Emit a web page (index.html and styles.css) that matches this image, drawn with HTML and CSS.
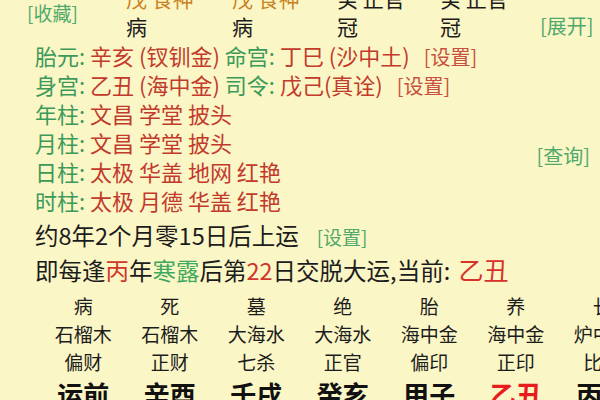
FILE: index.html
```html
<!DOCTYPE html>
<html lang="zh">
<head>
<meta charset="utf-8">
<link rel="stylesheet" href="styles.css">
</head>
<body>
<div class="page">
  <div class="top">
    <div class="fav link-green">[收藏]</div>
    <div class="cell r1 gan">戊 食神</div>
    <div class="cell r1 gan">戊 食神</div>
    <div class="cell r1">癸 正官</div>
    <div class="cell r1">癸 正官</div>
    <div class="cell r2">病</div>
    <div class="cell r2">病</div>
    <div class="cell r2">冠</div>
    <div class="cell r2">冠</div>
    <div class="expand link-green">[展开]</div>
  </div>

  <div class="info">
    <div class="line"><span class="lbl">胎元:</span> <span class="val">辛亥 (钗钏金)</span> <span class="lbl">命宫:</span> <span class="val">丁巳 (沙中土)</span><span class="set">[设置]</span></div>
    <div class="line"><span class="lbl">身宫:</span> <span class="val">乙丑 (海中金)</span> <span class="lbl">司令:</span> <span class="val">戊己(真诠)</span><span class="set">[设置]</span></div>
    <div class="shensha">
      <div class="ss-lines">
        <div class="line"><span class="lbl">年柱:</span> <span class="val">文昌 学堂 披头</span></div>
        <div class="line"><span class="lbl">月柱:</span> <span class="val">文昌 学堂 披头</span></div>
        <div class="line"><span class="lbl">日柱:</span> <span class="val">太极 华盖 地网 红艳</span></div>
        <div class="line"><span class="lbl">时柱:</span> <span class="val">太极 月德 华盖 红艳</span></div>
      </div>
      <div class="query link-green">[查询]</div>
    </div>
  </div>

  <div class="yun">
    <div class="yline">约8年2个月零15日后上运<span class="yset link-green">[设置]</span></div>
    <div class="yline">即每逢<span class="red">丙</span>年<span class="green">寒露</span>后第<span class="red">22</span>日交脱大运,当前: <span class="cur">乙丑</span></div>
  </div>

  <div class="dayun">
    <div>病</div><div>死</div><div>墓</div><div>绝</div><div>胎</div><div>养</div><div>长</div>
    <div>石榴木</div><div>石榴木</div><div>大海水</div><div>大海水</div><div>海中金</div><div>海中金</div><div>炉中火</div>
    <div>偏财</div><div>正财</div><div>七杀</div><div>正官</div><div>偏印</div><div>正印</div><div>比肩</div>
    <div class="big">运前</div><div class="big">辛酉</div><div class="big">壬戌</div><div class="big">癸亥</div><div class="big">甲子</div><div class="big now">乙丑</div><div class="big">丙寅</div>
  </div>
</div>
</body>
</html>
```

FILE: styles.css
```css
html, body {
  margin: 0;
  padding: 0;
}
body {
  background: #fbf6c6;
  font-family: "Noto Sans CJK SC", "Noto Sans", sans-serif;
  color: #1c1c1c;
  width: 600px;
  height: 400px;
  overflow: hidden;
}
.page {
  width: 600px;
  height: 400px;
  overflow: hidden;
}
.link-green {
  color: #4fa96c;
  font-size: 19px;
  line-height: 1;
  white-space: nowrap;
}
.top {
  display: grid;
  grid-template-columns: 126px 106px 105px 103px 100px 1fr;
  grid-template-rows: 28px 28px;
  margin-top: -16px;
  font-size: 21px;
  line-height: 28px;
}
.fav {
  grid-column: 1;
  grid-row: 1 / span 2;
  align-self: center;
  padding-left: 27px;
}
.cell {
  white-space: nowrap;
}
.r1 {
  grid-row: 1;
}
.r2 {
  grid-row: 2;
}
.gan {
  color: #c98324;
}
.expand {
  grid-column: 6;
  grid-row: 2;
  justify-self: end;
  align-self: center;
  padding-right: 10px;
  font-size: 20px;
}
.info {
  padding-left: 35px;
  font-size: 22px;
  line-height: 29px;
  margin-top: 1px;
}
.line {
  white-space: nowrap;
  height: 29px;
}
.lbl {
  color: #3b9a59;
}
.val {
  color: #c23a2c;
}
.set {
  color: #c9503f;
  font-size: 20px;
  line-height: 1;
  margin-left: 14px;
}
.shensha {
  display: flex;
  align-items: center;
  justify-content: space-between;
  padding-right: 10px;
}
.query {
  font-size: 20px;
  margin-top: -2px;
}
.yun {
  padding-left: 35px;
  font-size: 23.5px;
  line-height: 33px;
  margin-top: 4px;
  white-space: nowrap;
}
.yline {
  height: 33px;
}
.yline:last-child {
  padding-top: 2px;
}
.yset {
  margin-left: 18px;
}
.red {
  color: #d0362a;
}
.green {
  color: #3eaa5f;
}
.cur {
  color: #d8302a;
  font-size: 25px;
  line-height: 1;
  margin-left: 3px;
}
.dayun {
  display: grid;
  grid-template-columns: repeat(7, 86.5px);
  grid-auto-rows: 28px;
  margin-left: 40px;
  margin-top: 5px;
  font-size: 19px;
  line-height: 28px;
  text-align: center;
  white-space: nowrap;
}
.big {
  font-size: 26px;
  font-weight: 700;
  line-height: 36px;
  color: #111;
}
.now {
  color: #e81c1c;
}
```
